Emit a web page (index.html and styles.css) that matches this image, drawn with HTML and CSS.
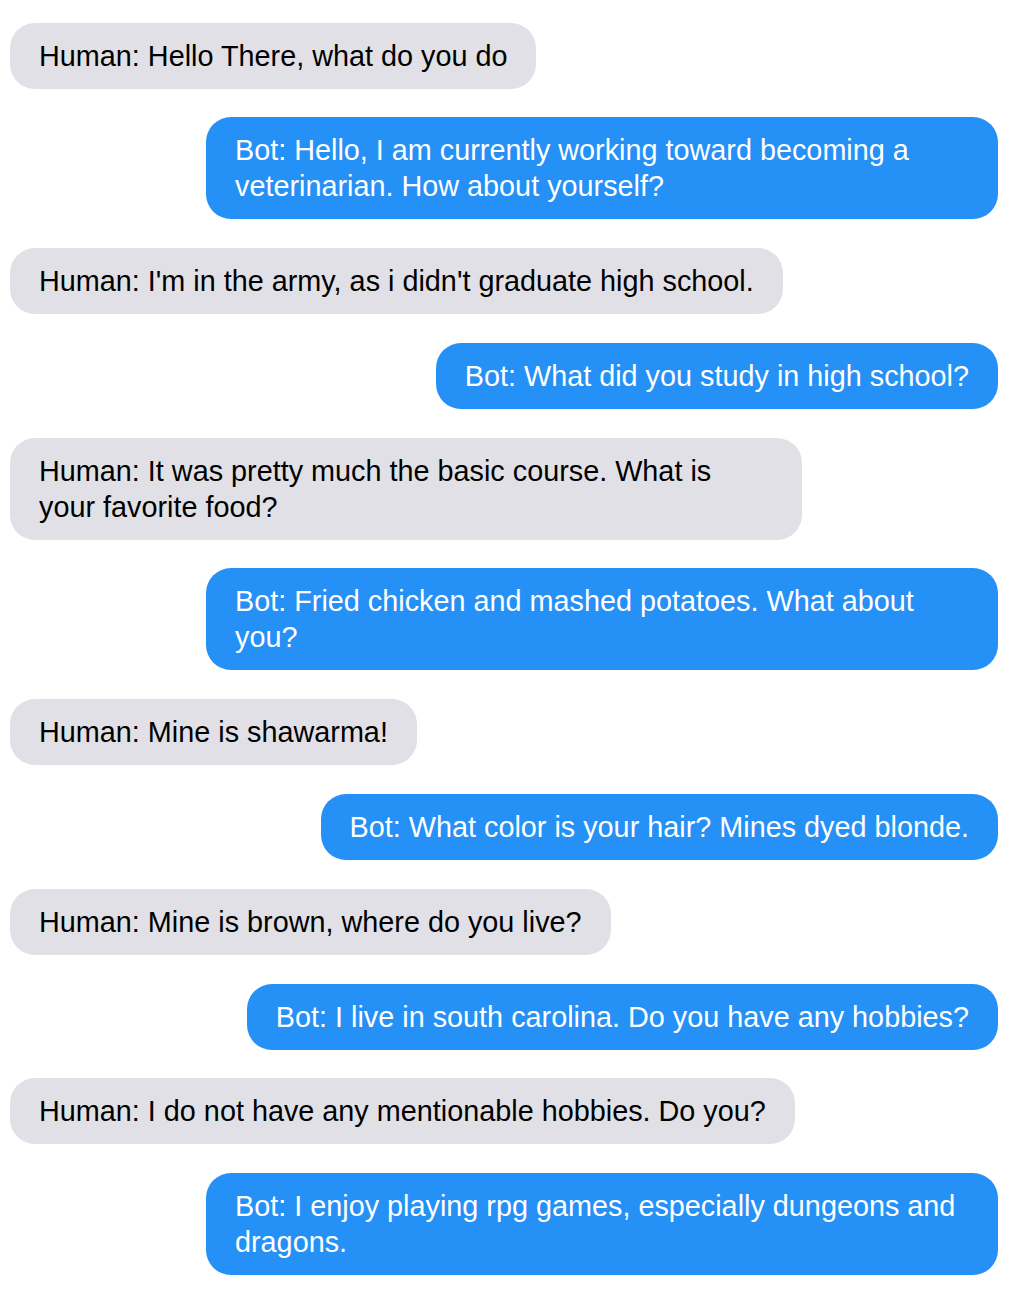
FILE: index.html
```html
<!DOCTYPE html>
<html>
<head>
<meta charset="utf-8">
<link rel="stylesheet" href="styles.css">
</head>
<body>
<div class="chat">
  <div class="msg human">Human: Hello There, what do you do</div>
  <div class="msg bot">Bot: Hello, I am currently working toward becoming a veterinarian. How about yourself?</div>
  <div class="msg human">Human: I'm in the army, as i didn't graduate high school.</div>
  <div class="msg bot">Bot: What did you study in high school?</div>
  <div class="msg human">Human: It was pretty much the basic course. What is your favorite food?</div>
  <div class="msg bot">Bot: Fried chicken and mashed potatoes. What about you?</div>
  <div class="msg human">Human: Mine is shawarma!</div>
  <div class="msg bot">Bot: What color is your hair? Mines dyed blonde.</div>
  <div class="msg human">Human: Mine is brown, where do you live?</div>
  <div class="msg bot">Bot: I live in south carolina. Do you have any hobbies?</div>
  <div class="msg human">Human: I do not have any mentionable hobbies. Do you?</div>
  <div class="msg bot">Bot: I enjoy playing rpg games, especially dungeons and dragons.</div>
</div>
</body>
</html>
```
FILE: styles.css
```css
html, body {
  margin: 0;
  padding: 0;
  background: #ffffff;
}
.chat {
  display: flex;
  flex-direction: column;
  gap: 28.8px;
  padding: 22.5px 20px 0 10px;
  font-family: "Liberation Sans", Arial, Helvetica, sans-serif;
  font-size: 28.8px;
  line-height: 36px;
}
.msg {
  max-width: 792px;
  box-sizing: border-box;
  padding: 15px 29px;
  border-radius: 25px;
}
.human {
  align-self: flex-start;
  background: #e1e0e6;
  color: #000000;
}
.bot {
  align-self: flex-end;
  background: #2590f6;
  color: #ffffff;
}
```
